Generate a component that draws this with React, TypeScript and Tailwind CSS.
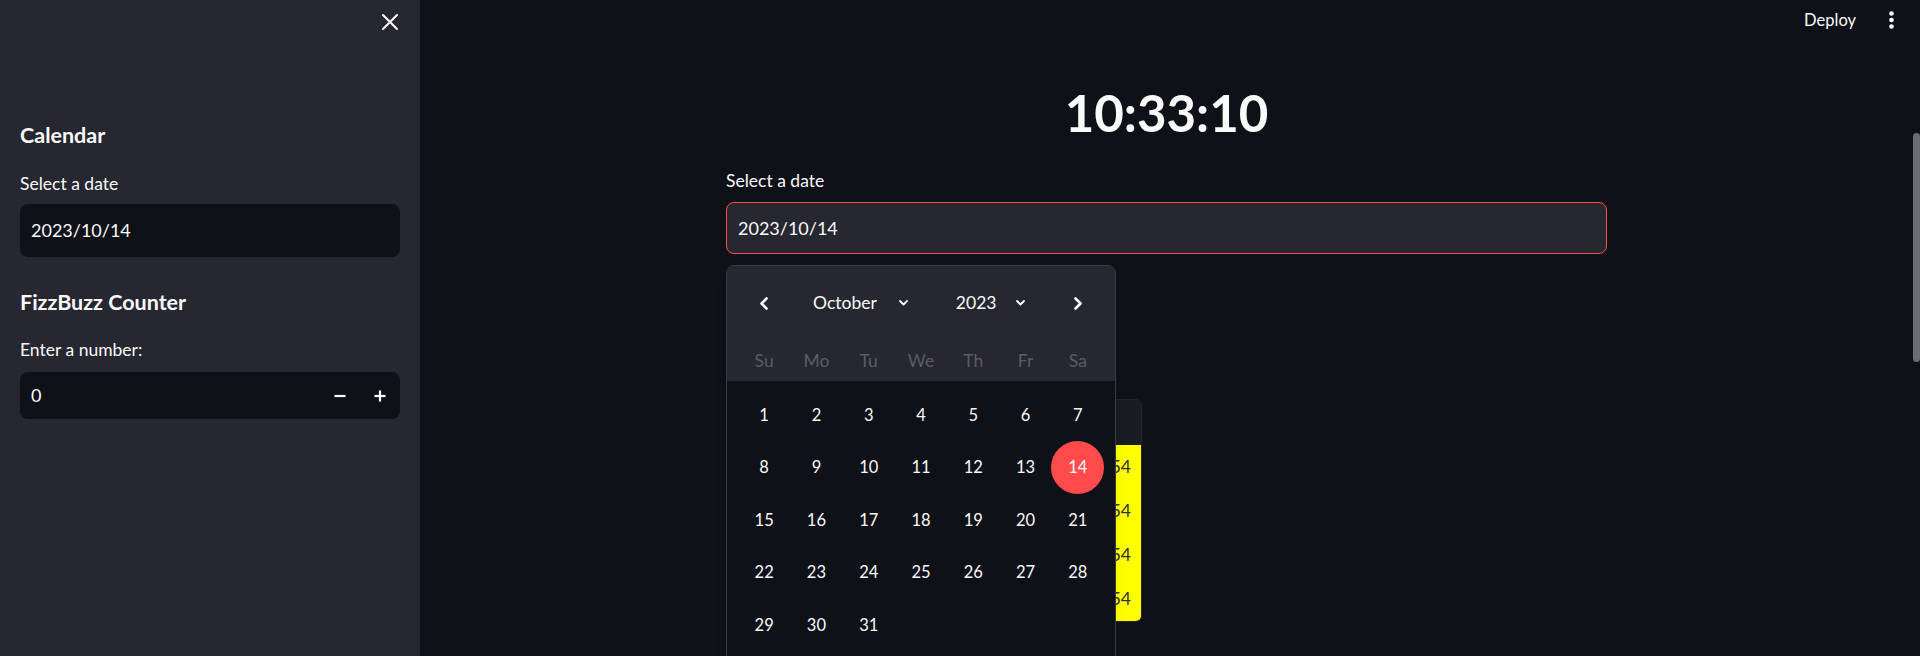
import { X } from "lucide-react"

const weekdays = ["Su", "Mo", "Tu", "We", "Th", "Fr", "Sa"]
const days = Array.from({ length: 31 }, (_, i) => i + 1)
const rows = [
  { idx: 0, value: "154" },
  { idx: 1, value: "254" },
  { idx: 2, value: "354" },
  { idx: 3, value: "454" },
]

function ChevronSmall() {
  return (
    <svg width="9" height="6" viewBox="0 0 9 6" fill="none">
      <polyline points="1,1 4.5,4.5 8,1" stroke="#fafafa" strokeWidth="1.8" strokeLinecap="round" strokeLinejoin="round" />
    </svg>
  )
}

function Arrow({ dir }: { dir: "left" | "right" }) {
  return (
    <svg width="10" height="13" viewBox="0 0 10 13" fill="none">
      <polyline
        points={dir === "left" ? "7.5,1.5 2.5,6.5 7.5,11.5" : "2.5,1.5 7.5,6.5 2.5,11.5"}
        stroke="#fafafa"
        strokeWidth="2.6"
        strokeLinecap="round"
        strokeLinejoin="round"
      />
    </svg>
  )
}

function DatePopover() {
  return (
    <div className="absolute left-0 top-[63px] z-10 w-[390px] overflow-hidden rounded-t-lg border border-[#3a3b44] bg-[#0e1117] shadow-lg">
      {/* header */}
      <div className="bg-[#262730] pt-[13px]">
        <div className="flex h-[48px] items-center px-[11px]">
          <div className="flex w-[52px] justify-center">
            <Arrow dir="left" />
          </div>
          <div className="ml-[23px] flex items-center text-[17.5px] text-[#fafafa]">
            <span>October</span>
            <span className="ml-[22px]">
              <ChevronSmall />
            </span>
            <span className="ml-[48px]">2023</span>
            <span className="ml-[20px]">
              <ChevronSmall />
            </span>
          </div>
          <div className="ml-auto flex w-[52px] justify-center">
            <Arrow dir="right" />
          </div>
        </div>
        <div className="mt-[14px] grid h-[40px] grid-cols-7 items-center px-[11px] text-[17.5px] text-[#5b5c63]">
          {weekdays.map((d) => (
            <div key={d} className="text-center">
              {d}
            </div>
          ))}
        </div>
      </div>
      {/* days */}
      <div className="grid auto-rows-[52.5px] grid-cols-7 px-[11px] pb-[10px] pt-[8px] text-[16.5px] text-[#fafafa]">
        {days.map((d) => (
          <div key={d} className="flex items-center justify-center">
            {d === 14 ? (
              <div className="flex h-[53px] w-[53px] shrink-0 items-center justify-center rounded-full bg-[#ff4b4b]">{d}</div>
            ) : (
              d
            )}
          </div>
        ))}
      </div>
    </div>
  )
}

export default function App() {
  return (
    <div className="flex h-[656px] w-full overflow-hidden bg-[#0e1117] font-[family-name:Lato,sans-serif] text-[#fafafa]">
      {/* Sidebar */}
      <aside className="flex w-[420px] shrink-0 flex-col bg-[#262730]">
        <div className="flex h-[44px] items-center justify-end pr-[16px]">
          <X size={28} strokeWidth={1.75} color="#fafafa" />
        </div>
        <div className="px-5">
          <h3 className="mt-[77px] text-[21.5px] font-bold leading-[28px]">Calendar</h3>
          <label className="mt-[23px] block text-[17.5px] leading-[24px]">Select a date</label>
          <div className="mt-[8px] flex h-[53px] items-center rounded-lg bg-[#0e1117] pl-[11px] text-[18px]">
            2023/10/14
          </div>
          <h3 className="mt-[31px] text-[21.5px] font-bold leading-[28px]">FizzBuzz Counter</h3>
          <label className="mt-[22px] block text-[17.5px] leading-[24px]">Enter a number:</label>
          <div className="mt-[10px] flex h-[47px] items-center rounded-lg bg-[#0e1117] text-[18px]">
            <span className="flex-1 pl-[11px]">0</span>
            <div className="flex w-[40px] justify-center">
              <svg width="12" height="12" viewBox="0 0 12 12">
                <line x1="0.5" y1="6" x2="11.5" y2="6" stroke="#fafafa" strokeWidth="2.2" />
              </svg>
            </div>
            <div className="flex w-[40px] justify-center">
              <svg width="12" height="12" viewBox="0 0 12 12">
                <line x1="0.5" y1="6" x2="11.5" y2="6" stroke="#fafafa" strokeWidth="2.2" />
                <line x1="6" y1="0.5" x2="6" y2="11.5" stroke="#fafafa" strokeWidth="2.2" />
              </svg>
            </div>
          </div>
        </div>
      </aside>

      {/* Main */}
      <main className="relative flex flex-1 flex-col">
        <div className="flex h-[40px] items-center justify-end pr-[26px]">
          <span className="text-[16.5px]">Deploy</span>
          <svg className="ml-[33px]" width="5" height="18" viewBox="0 0 5 18">
            <circle cx="2.5" cy="2.5" r="2.3" fill="#fafafa" />
            <circle cx="2.5" cy="9" r="2.3" fill="#fafafa" />
            <circle cx="2.5" cy="15.5" r="2.3" fill="#fafafa" />
          </svg>
        </div>

        <div className="ml-[306px] w-[881px]">
          <h1 className="mt-[42px] text-center text-[51px] font-bold leading-[61px]">10:33:10</h1>
          <label className="mt-[26px] block text-[17.5px] leading-[24px]">Select a date</label>
          <div className="relative mt-[9px]">
            <div className="flex h-[52px] items-center rounded-lg border border-[#ff4b4b] bg-[#262730] pl-[11px] text-[18px]">
              2023/10/14
            </div>
            <DatePopover />
          </div>

          {/* dataframe behind the popover */}
          <div className="mt-[145px] w-[416px] overflow-hidden rounded-md border border-[#23252d]">
            <div className="h-[45px] bg-[#1a1c24]" />
            {rows.map((r) => (
              <div key={r.idx} className="flex h-[44px] items-center bg-[#ffff00] text-[17.5px] text-[#31333f]">
                <div className="w-[40px] px-[10px] text-[#808495]">{r.idx}</div>
                <div className="flex-1 pr-[10px] text-right">{r.value}</div>
              </div>
            ))}
          </div>
        </div>

        {/* scrollbar */}
        <div className="absolute right-0 top-[133px] h-[229px] w-[7px] rounded-full bg-[#6b6b70]" />
      </main>
    </div>
  )
}
